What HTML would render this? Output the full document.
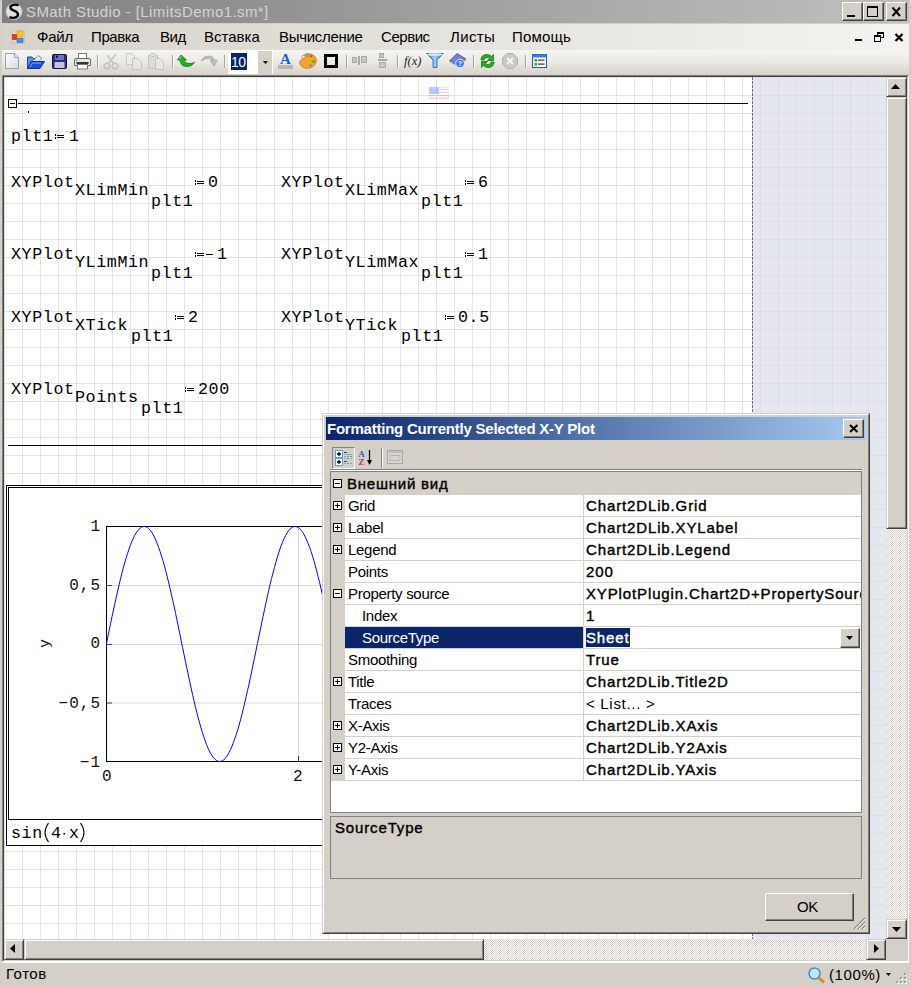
<!DOCTYPE html>
<html><head><meta charset="utf-8">
<style>
*{margin:0;padding:0;box-sizing:border-box}
html,body{width:911px;height:987px;overflow:hidden;background:#d4d0c8;font-family:"Liberation Sans",sans-serif;position:relative}
.a{position:absolute;white-space:nowrap;line-height:1}
.t15{font-size:15px;letter-spacing:-0.3px;color:#000}
.b15{font-size:15px;-webkit-text-stroke:0.4px currentColor;letter-spacing:0.87px;color:#000}
.plab{font-family:"Liberation Mono",monospace;font-size:16px;letter-spacing:1px;color:#111}
.mono{font-family:"Liberation Mono",monospace;font-size:16.67px;color:#000;letter-spacing:0.6px}
#title{left:2px;top:0;width:907px;height:23px;background:linear-gradient(to right,#808080,#c0c0c0)}
.tbtn{top:2px;width:21px;height:19px}
.btn3d{background:#d4d0c8;border-top:1px solid #fff;border-left:1px solid #fff;border-right:1px solid #404040;border-bottom:1px solid #404040;box-shadow:inset -1px -1px 0 #808080}
#menu{left:2px;top:24px;width:907px;height:26px;background:linear-gradient(to right,#d6d3cb 0%,#f4f3f0 100%)}
#tool{left:2px;top:50px;width:907px;height:24px;background:linear-gradient(to bottom,#f6f5f2,#ebe9e4 50%,#d8d4cc)}
#page{left:4px;top:77px;width:748px;height:862px;background-color:#fff;
 background-image:linear-gradient(to right,transparent 17px,#e3e3e3 17px),linear-gradient(to bottom,transparent 17px,#e3e3e3 17px);
 background-size:18px 18px;background-position:1px 1px}
#outer{left:752px;top:77px;width:134px;height:862px;background-color:#e4e7f0;
 background-image:linear-gradient(to right,transparent 17px,#dedee0 17px),linear-gradient(to bottom,transparent 17px,#dedee0 17px);
 background-size:18px 18px;background-position:-9px 1px}
.sb{background:#d4d0c8;border-top:1px solid #d4d0c8;border-left:1px solid #d4d0c8;border-right:1px solid #404040;border-bottom:1px solid #404040;box-shadow:inset 1px 1px 0 #fff,inset -1px -1px 0 #808080}
.dither{background-color:#fff;background-image:linear-gradient(45deg,#d4d0c8 25%,transparent 25%,transparent 75%,#d4d0c8 75%),linear-gradient(45deg,#d4d0c8 25%,transparent 25%,transparent 75%,#d4d0c8 75%);background-size:2px 2px;background-position:0 0,1px 1px}
.sep{position:absolute;width:2px;height:13px;border-left:1px solid #a5a29b;border-right:1px solid #fff;top:55px}
</style></head><body>
<div id="title" class="a"></div>
<svg class="a" style="left:4px;top:2px" width="20" height="19" viewBox="0 0 20 19">
 <circle cx="10" cy="9.5" r="8" fill="#e0e0e0" stroke="#bdbdbd" stroke-width="1"/>
 <path d="M14.5 3.5 C12 2 6 2.5 6.5 6 C7 9 14 8.5 14 12.5 C14 16 8 16.5 5.5 15" fill="none" stroke="#000" stroke-width="2.4"/>
</svg>
<div class="a" style="left:26px;top:4px;font-size:15px;letter-spacing:0.42px;color:#d8d4cc">SMath Studio - [LimitsDemo1.sm*]</div>
<div class="a tbtn btn3d" style="left:842px"><div class="a" style="left:4px;top:12px;width:8px;height:2px;background:#000"></div></div>
<div class="a tbtn btn3d" style="left:863px"><div class="a" style="left:3px;top:3px;width:11px;height:11px;border:1px solid #000;border-top:2px solid #000"></div></div>
<div class="a tbtn btn3d" style="left:886px"><svg class="a" style="left:4px;top:3px" width="11" height="11"><path d="M1.5 1.5 L9 10 M9 1.5 L1.5 10" stroke="#000" stroke-width="2"/></svg></div>

<div id="menu" class="a"></div>
<svg class="a" style="left:11px;top:30px" width="14" height="14" viewBox="0 0 14 14">
 <rect x="0.5" y="0.5" width="13" height="13" fill="#d9d6ce" stroke="#c8c5bd"/>
 <rect x="6" y="1" width="6" height="6" fill="#f7c825" stroke="#d9a300" stroke-width="0.6"/>
 <rect x="1.5" y="4.5" width="4" height="5" fill="#e23b2c" stroke="#a81e10" stroke-width="0.6"/>
 <rect x="6" y="8.5" width="6" height="4" fill="#4f8ee8" stroke="#2d64c0" stroke-width="0.6"/>
</svg>
<div class="a t15" style="left:37px;top:29px;letter-spacing:-0.2px">Файл</div>
<div class="a t15" style="left:91px;top:29px;letter-spacing:-0.4px">Правка</div>
<div class="a t15" style="left:160px;top:29px;letter-spacing:-0.5px">Вид</div>
<div class="a t15" style="left:204px;top:29px;letter-spacing:0px">Вставка</div>
<div class="a t15" style="left:279px;top:29px;letter-spacing:-0.3px">Вычисление</div>
<div class="a t15" style="left:381px;top:29px;letter-spacing:-0.45px">Сервис</div>
<div class="a t15" style="left:450px;top:29px;letter-spacing:0.35px">Листы</div>
<div class="a t15" style="left:512px;top:29px;letter-spacing:0.2px">Помощь</div>
<div class="a" style="left:855px;top:39px;width:7px;height:2px;background:#000"></div>
<svg class="a" style="left:874px;top:32px" width="10" height="10"><rect x="3.5" y="0.5" width="6" height="5" fill="none" stroke="#000"/><rect x="3" y="0" width="7" height="2" fill="#000"/><rect x="0.5" y="3.5" width="6" height="6" fill="#f2f1ee" stroke="#000"/><rect x="0" y="3" width="7" height="2" fill="#000"/></svg>
<svg class="a" style="left:894px;top:33px" width="10" height="9"><path d="M1.5 1 L8.5 8 M8.5 1 L1.5 8" stroke="#000" stroke-width="2.2"/></svg>

<div id="tool" class="a"></div>
<!-- new -->
<svg class="a" style="left:5px;top:53px" width="15" height="17" viewBox="0 0 15 17">
 <defs><linearGradient id="gpage" x1="0" y1="0" x2="1" y2="1"><stop offset="0" stop-color="#fff"/><stop offset="1" stop-color="#d8dbe6"/></linearGradient></defs>
 <path d="M0.5 0.5 H9.5 L13.5 4.5 V15.5 H0.5 Z" fill="url(#gpage)" stroke="#9a9da8"/>
 <path d="M9.5 0.5 V4.5 H13.5" fill="#e8e8ee" stroke="#9a9da8"/>
</svg>
<!-- open -->
<svg class="a" style="left:27px;top:54px" width="18" height="16" viewBox="0 0 18 16">
 <path d="M0.5 3 H5 L6.5 4.5 H12 V14.5 H0.5 Z" fill="#5d93e0" stroke="#1f46b8"/>
 <path d="M5 8 L11 1.5 L15 4 L10 10 Z" fill="#e6e6f2" stroke="#7b7fb0" stroke-width="0.8"/>
 <path d="M0.5 14.5 L4 7.5 H17.5 L13 14.5 Z" fill="#1b4fd8" stroke="#1035a8"/>
 <path d="M3 13 L5.5 9 H14" fill="none" stroke="#7ab0ff" stroke-width="1"/>
</svg>
<!-- save -->
<svg class="a" style="left:52px;top:54px" width="15" height="15" viewBox="0 0 15 15">
 <rect x="0.5" y="0.5" width="14" height="14" rx="1" fill="#2a2f7c" stroke="#10134a"/>
 <rect x="3" y="1" width="9" height="5" fill="#6c78b8"/>
 <rect x="4" y="1.5" width="2" height="2.5" fill="#10134a"/>
 <rect x="2.5" y="8" width="10" height="6" fill="#c4c4e0"/>
</svg>
<!-- print -->
<svg class="a" style="left:74px;top:53px" width="17" height="17" viewBox="0 0 17 17">
 <rect x="4.5" y="0.5" width="8" height="5" fill="#fff" stroke="#7a7a7a"/>
 <path d="M0.5 7 Q0.5 5.5 2 5.5 H15 Q16.5 5.5 16.5 7 V12.5 H0.5 Z" fill="#e6e6e6" stroke="#6a6a6a"/>
 <rect x="2.5" y="9" width="12" height="2" fill="#333"/>
 <rect x="3.5" y="11.5" width="10" height="4.5" fill="#fff" stroke="#7a7a7a"/>
 <circle cx="2.7" cy="7.5" r="0.8" fill="#28c028"/>
</svg>
<div class="sep" style="left:97px"></div>
<!-- cut (disabled) -->
<svg class="a" style="left:103px;top:53px" width="16" height="17" viewBox="0 0 16 17">
 <path d="M5 11 L13 1 M11 11 L4 2" stroke="#c4c4c4" stroke-width="1.6" fill="none"/>
 <circle cx="4" cy="13" r="2.8" fill="none" stroke="#c0c0c0" stroke-width="1.5"/>
 <circle cx="12" cy="13" r="2.8" fill="none" stroke="#c0c0c0" stroke-width="1.5"/>
</svg>
<!-- copy -->
<svg class="a" style="left:126px;top:53px" width="17" height="17" viewBox="0 0 17 17">
 <path d="M0.5 0.5 H6 L8.5 3 V11.5 H0.5 Z" fill="#ececec" stroke="#c8c8c8"/>
 <path d="M6.5 5.5 H12 L15.5 9 V16.5 H6.5 Z" fill="#e6e6e6" stroke="#c4c4c4"/>
</svg>
<!-- paste -->
<svg class="a" style="left:148px;top:53px" width="17" height="17" viewBox="0 0 17 17">
 <rect x="0.5" y="2.5" width="9" height="13" fill="#dcdcdc" stroke="#c4c4c4"/>
 <rect x="2.5" y="0.5" width="5" height="3" rx="1" fill="#e4e4e4" stroke="#c0c0c0"/>
 <path d="M7.5 5.5 H12 L15.5 9 V16.5 H7.5 Z" fill="#e8e8e8" stroke="#c4c4c4"/>
</svg>
<div class="sep" style="left:172px"></div>
<!-- undo green -->
<svg class="a" style="left:177px;top:54px" width="18" height="14" viewBox="0 0 18 14">
 <path d="M4 1 L0.5 6 H3 Q3.5 12.5 10 12.5 Q15 12.5 17.5 8.5 Q14 10 11 9.5 Q7 9 7 6 H9.5 Z" fill="#22b022" stroke="#0d7a0d" stroke-width="0.8"/>
 <path d="M4 2.5 L2.5 5" stroke="#a8f0a8" stroke-width="1"/>
</svg>
<!-- redo disabled -->
<svg class="a" style="left:201px;top:55px" width="17" height="13" viewBox="0 0 17 13">
 <path d="M0.5 6 Q2 1 8 1 Q12 1 13.5 5 H16.5 L13 11.5 L9 5 H11.5 Q10 3.5 7.5 3.5 Q3 3.5 0.5 6 Z" fill="#bcbcbc" stroke="#a8a8a8" stroke-width="0.7"/>
</svg>
<div class="sep" style="left:224px"></div>
<!-- combo -->
<div class="a" style="left:228px;top:50px;width:45px;height:24px;background:#fff"></div>
<div class="a" style="left:231px;top:53px;width:16px;height:17px;background:#0a246a"></div>
<div class="a" style="left:231px;top:55px;font-size:14px;color:#fff;letter-spacing:-0.5px">10</div>
<div class="a" style="left:258px;top:51px;width:14px;height:23px;background:#d4d0c8"></div>
<svg class="a" style="left:263px;top:61px" width="5" height="3"><path d="M0 0 H5 L2.5 3 Z" fill="#000"/></svg>
<!-- A -->
<svg class="a" style="left:278px;top:52px" width="16" height="17" viewBox="0 0 16 17">
 <text x="7.5" y="12" font-family="Liberation Serif" font-weight="bold" font-size="15" fill="#1a5fc8" text-anchor="middle">A</text>
 <rect x="0" y="13" width="15" height="4" fill="#b8b8b8"/>
</svg>
<!-- palette -->
<svg class="a" style="left:299px;top:53px" width="18" height="16" viewBox="0 0 18 16">
 <path d="M9 0.8 C14 0.8 17.3 3.5 17.3 7.5 C17.3 12 13 15.3 8.5 15.3 C4 15.3 0.7 12.5 0.7 9 C0.7 7 3.5 7.5 3.5 5.5 C3.5 3 5 0.8 9 0.8 Z" fill="#f5a623" stroke="#c47000" stroke-width="0.8"/>
 <circle cx="4.5" cy="3.8" r="1.6" fill="#fff" stroke="#b06000" stroke-width="0.6"/>
 <circle cx="8.5" cy="2.8" r="1.3" fill="#2aa8f0"/>
 <circle cx="12" cy="3.2" r="1.2" fill="#e84020"/>
 <circle cx="14.5" cy="8.5" r="1.6" fill="#30c030"/>
 <circle cx="11.5" cy="12.5" r="1.4" fill="#a070e0"/>
</svg>
<!-- border square -->
<div class="a" style="left:324px;top:54px;width:14px;height:14px;border:3px solid #000"></div>
<div class="sep" style="left:346px"></div>
<!-- align 1 -->
<svg class="a" style="left:352px;top:56px" width="16" height="10" viewBox="0 0 16 10">
 <rect x="0.5" y="1.5" width="4" height="5" fill="#c8c8c8" stroke="#a8a8a8"/>
 <rect x="6" y="0" width="2" height="9" fill="#a8a8a8"/>
 <rect x="9.5" y="0.5" width="5" height="6" fill="#c8c8c8" stroke="#a8a8a8"/>
</svg>
<!-- align 2 -->
<svg class="a" style="left:378px;top:53px" width="10" height="16" viewBox="0 0 10 16">
 <rect x="1.5" y="0.5" width="4" height="4" fill="#c8c8c8" stroke="#a8a8a8"/>
 <rect x="0" y="6" width="9" height="2" fill="#a8a8a8"/>
 <rect x="1.5" y="9.5" width="6" height="5" fill="#c8c8c8" stroke="#a8a8a8"/>
</svg>
<div class="sep" style="left:397px"></div>
<div class="a" style="left:404px;top:55px;font-family:'Liberation Serif',serif;font-style:italic;font-size:12.5px;color:#222">f(x)</div>
<!-- funnel -->
<svg class="a" style="left:426px;top:53px" width="18" height="15" viewBox="0 0 18 15">
 <defs><linearGradient id="gfun" x1="0" x2="1"><stop offset="0" stop-color="#3a86c8"/><stop offset="0.5" stop-color="#9cd0f4"/><stop offset="1" stop-color="#2a70b0"/></linearGradient></defs>
 <path d="M0.5 0.5 H17.5 L11 7 V14.5 H7 V7 Z" fill="url(#gfun)" stroke="#2060a0" stroke-width="0.8"/>
 <ellipse cx="9" cy="1.5" rx="8" ry="1.3" fill="#d8eefc"/>
</svg>
<!-- book ? -->
<svg class="a" style="left:449px;top:53px" width="18" height="16" viewBox="0 0 18 16">
 <path d="M0.5 8 L8 0.5 L17 6 L10 14 Z" fill="#7a7ed8" stroke="#3a3e98" stroke-width="0.8"/>
 <path d="M1.5 9.5 L10 15 L17 7" fill="none" stroke="#d0d0f0" stroke-width="1.2"/>
 <circle cx="11" cy="10.5" r="4.3" fill="#3c78e0" stroke="#fff" stroke-width="0.8"/>
 <text x="11" y="13.3" font-size="7" font-weight="bold" fill="#fff" text-anchor="middle" font-family="Liberation Sans">?</text>
</svg>
<div class="sep" style="left:473px"></div>
<!-- refresh green -->
<svg class="a" style="left:479px;top:53px" width="17" height="16" viewBox="0 0 17 16">
 <path d="M2 7 Q2 1.5 8 1.5 Q11 1.5 12.5 3.5 L14.5 1.5 V7.5 H8.5 L10.5 5.5 Q9.5 4.5 8 4.5 Q5 4.5 5 7 Z" fill="#22b022" stroke="#0a700a" stroke-width="0.7"/>
 <path d="M15 9 Q15 14.5 9 14.5 Q6 14.5 4.5 12.5 L2.5 14.5 V8.5 H8.5 L6.5 10.5 Q7.5 11.5 9 11.5 Q12 11.5 12 9 Z" fill="#22b022" stroke="#0a700a" stroke-width="0.7"/>
</svg>
<!-- stop gray -->
<svg class="a" style="left:502px;top:53px" width="16" height="16" viewBox="0 0 16 16">
 <path d="M5 0.5 H11 L15.5 5 V11 L11 15.5 H5 L0.5 11 V5 Z" fill="#c8c8c8" stroke="#b0b0b0"/>
 <path d="M5 5 L11 11 M11 5 L5 11" stroke="#f4f4f4" stroke-width="2.2"/>
</svg>
<div class="sep" style="left:525px"></div>
<!-- list -->
<svg class="a" style="left:532px;top:54px" width="15" height="14" viewBox="0 0 15 14">
 <rect x="0.5" y="0.5" width="14" height="13" fill="#fff" stroke="#1a5ab8"/>
 <rect x="0.5" y="0.5" width="14" height="3" fill="#3a80e0"/>
 <rect x="2.5" y="5" width="2.5" height="2.5" fill="#30a030"/>
 <rect x="2.5" y="9" width="2.5" height="2.5" fill="#30a030"/>
 <rect x="6" y="5.5" width="6.5" height="1.2" fill="#333"/>
 <rect x="6" y="9.5" width="6.5" height="1.2" fill="#333"/>
</svg>
<div class="a" style="left:2px;top:75px;width:907px;height:887px;border-top:1px solid #808080;border-left:1px solid #808080;border-right:1px solid #fff;border-bottom:1px solid #fff"></div>
<div class="a" style="left:3px;top:76px;width:905px;height:885px;border-top:1px solid #404040;border-left:1px solid #404040;border-right:1px solid #d4d0c8;border-bottom:1px solid #d4d0c8"></div>
<div id="page" class="a"></div>
<div id="outer" class="a"></div>
<div class="a" style="left:752px;top:77px;width:1px;height:862px;background:repeating-linear-gradient(to bottom,#707070 0 3px,transparent 3px 4px)"></div>

<!-- region -->
<div class="a" style="left:8px;top:99px;width:9px;height:9px;border:1px solid #000;background:#fff"></div>
<div class="a" style="left:10px;top:103px;width:5px;height:1px;background:#000"></div>
<div class="a" style="left:18px;top:103px;width:730px;height:1px;background:#000"></div>
<div class="a" style="left:28px;top:111px;width:1px;height:2px;background:#000"></div>
<!-- flag -->
<svg class="a" style="left:429px;top:87px;opacity:0.45" width="20" height="12" viewBox="0 0 20 12">
 <rect x="0" y="0" width="20" height="12" fill="#fff"/>
 <rect x="0" y="0" width="20" height="12" fill="none" stroke="#ff8080" stroke-width="1"/>
 <rect x="10" y="2" width="9" height="1" fill="#ff8080"/><rect x="10" y="5" width="9" height="1" fill="#ff8080"/><rect x="0" y="8" width="20" height="1" fill="#ff8080"/><rect x="0" y="10.5" width="20" height="1" fill="#ff8080"/>
 <rect x="0" y="0" width="10" height="7" fill="#8080ff"/>
 <rect x="1.5" y="1.5" width="8" height="5" fill="#4a90ff"/>
</svg>

<div class="a mono" style="left:11px;top:129px">plt1</div>
<svg class="a" style="left:55px;top:134px" width="9" height="5"><rect x="0" y="0" width="1" height="2"/><rect x="0" y="3" width="1" height="2"/><rect x="2" y="1" width="7" height="1"/><rect x="2" y="3" width="7" height="1"/></svg>
<div class="a mono" style="left:69px;top:129px">1</div>

<!-- row 2 -->
<div class="a mono" style="left:11px;top:175px">XYPlot</div>
<div class="a mono" style="left:75px;top:183px">XLimMin</div>
<div class="a mono" style="left:151px;top:194px">plt1</div>
<svg class="a" style="left:195px;top:180px" width="9" height="5"><rect x="0" y="0" width="1" height="2"/><rect x="0" y="3" width="1" height="2"/><rect x="2" y="1" width="7" height="1"/><rect x="2" y="3" width="7" height="1"/></svg>
<div class="a mono" style="left:208px;top:175px">0</div>
<div class="a mono" style="left:281px;top:175px">XYPlot</div>
<div class="a mono" style="left:345px;top:183px">XLimMax</div>
<div class="a mono" style="left:421px;top:194px">plt1</div>
<svg class="a" style="left:465px;top:180px" width="9" height="5"><rect x="0" y="0" width="1" height="2"/><rect x="0" y="3" width="1" height="2"/><rect x="2" y="1" width="7" height="1"/><rect x="2" y="3" width="7" height="1"/></svg>
<div class="a mono" style="left:478px;top:175px">6</div>
<!-- row 3 -->
<div class="a mono" style="left:11px;top:247px">XYPlot</div>
<div class="a mono" style="left:75px;top:255px">YLimMin</div>
<div class="a mono" style="left:151px;top:266px">plt1</div>
<svg class="a" style="left:195px;top:252px" width="9" height="5"><rect x="0" y="0" width="1" height="2"/><rect x="0" y="3" width="1" height="2"/><rect x="2" y="1" width="7" height="1"/><rect x="2" y="3" width="7" height="1"/></svg><div class="a" style="left:206px;top:254px;width:7px;height:1px;background:#000"></div><div class="a mono" style="left:217px;top:247px">1</div>
<div class="a mono" style="left:281px;top:247px">XYPlot</div>
<div class="a mono" style="left:345px;top:255px">YLimMax</div>
<div class="a mono" style="left:421px;top:266px">plt1</div>
<svg class="a" style="left:465px;top:252px" width="9" height="5"><rect x="0" y="0" width="1" height="2"/><rect x="0" y="3" width="1" height="2"/><rect x="2" y="1" width="7" height="1"/><rect x="2" y="3" width="7" height="1"/></svg>
<div class="a mono" style="left:478px;top:247px">1</div>
<!-- row 4 -->
<div class="a mono" style="left:11px;top:310px">XYPlot</div>
<div class="a mono" style="left:75px;top:318px">XTick</div>
<div class="a mono" style="left:131px;top:329px">plt1</div>
<svg class="a" style="left:175px;top:315px" width="9" height="5"><rect x="0" y="0" width="1" height="2"/><rect x="0" y="3" width="1" height="2"/><rect x="2" y="1" width="7" height="1"/><rect x="2" y="3" width="7" height="1"/></svg>
<div class="a mono" style="left:188px;top:310px">2</div>
<div class="a mono" style="left:281px;top:310px">XYPlot</div>
<div class="a mono" style="left:345px;top:318px">YTick</div>
<div class="a mono" style="left:401px;top:329px">plt1</div>
<svg class="a" style="left:445px;top:315px" width="9" height="5"><rect x="0" y="0" width="1" height="2"/><rect x="0" y="3" width="1" height="2"/><rect x="2" y="1" width="7" height="1"/><rect x="2" y="3" width="7" height="1"/></svg>
<div class="a mono" style="left:458px;top:310px">0.5</div>
<!-- row 5 -->
<div class="a mono" style="left:11px;top:382px">XYPlot</div>
<div class="a mono" style="left:75px;top:390px">Points</div>
<div class="a mono" style="left:141px;top:401px">plt1</div>
<svg class="a" style="left:185px;top:387px" width="9" height="5"><rect x="0" y="0" width="1" height="2"/><rect x="0" y="3" width="1" height="2"/><rect x="2" y="1" width="7" height="1"/><rect x="2" y="3" width="7" height="1"/></svg>
<div class="a mono" style="left:198px;top:382px">200</div>

<!-- region end line -->
<div class="a" style="left:8px;top:445px;width:740px;height:1px;background:#000"></div>

<!-- plot -->
<div class="a" style="left:6px;top:485px;width:700px;height:361px;background:#fff;border:1px solid #000"></div>
<div class="a" style="left:8px;top:487px;width:696px;height:333px;border:1px solid #000"></div>
<svg class="a" style="left:0;top:480px" width="700" height="300" viewBox="0 480 700 300">
 <g stroke="#d8d8d8" stroke-width="1">
  <line x1="107" y1="585.5" x2="683" y2="585.5"/>
  <line x1="107" y1="644.5" x2="683" y2="644.5"/>
  <line x1="107" y1="703" x2="683" y2="703"/>
  <line x1="298.5" y1="527" x2="298.5" y2="761"/>
 </g>
 <g stroke="#404040" stroke-width="1">
  <line x1="107" y1="585.5" x2="112" y2="585.5"/>
  <line x1="107" y1="644.5" x2="112" y2="644.5"/>
  <line x1="107" y1="703" x2="112" y2="703"/>
  <line x1="298.5" y1="756" x2="298.5" y2="761"/>
 </g>
 <rect x="106.5" y="526.5" width="576" height="235" fill="none" stroke="#000" stroke-width="1"/>
 <polyline fill="none" stroke="#0000ff" stroke-width="1" points="106.4,644.0 107.8,637.1 109.2,630.2 110.6,623.4 112.0,616.6 113.5,610.0 114.9,603.4 116.3,597.0 117.7,590.8 119.1,584.7 120.5,578.9 121.9,573.2 123.3,567.9 124.7,562.7 126.2,557.9 127.6,553.3 129.0,549.1 130.4,545.2 131.8,541.6 133.2,538.4 134.6,535.6 136.0,533.1 137.5,531.0 138.9,529.3 140.3,528.0 141.7,527.1 143.1,526.6 144.5,526.5 145.9,526.8 147.3,527.5 148.7,528.7 150.2,530.2 151.6,532.1 153.0,534.4 154.4,537.0 155.8,540.1 157.2,543.5 158.6,547.2 160.0,551.3 161.4,555.7 162.9,560.4 164.3,565.4 165.7,570.7 167.1,576.2 168.5,581.9 169.9,587.9 171.3,594.0 172.7,600.4 174.2,606.9 175.6,613.5 177.0,620.2 178.4,627.0 179.8,633.8 181.2,640.7 182.6,647.6 184.0,654.5 185.4,661.4 186.9,668.2 188.3,674.9 189.7,681.5 191.1,688.0 192.5,694.3 193.9,700.4 195.3,706.4 196.7,712.1 198.1,717.6 199.6,722.9 201.0,727.9 202.4,732.5 203.8,736.9 205.2,741.0 206.6,744.7 208.0,748.1 209.4,751.1 210.8,753.8 212.3,756.0 213.7,757.9 215.1,759.4 216.5,760.5 217.9,761.2 219.3,761.5 220.7,761.4 222.1,760.9 223.6,759.9 225.0,758.6 226.4,756.9 227.8,754.8 229.2,752.3 230.6,749.4 232.0,746.2 233.4,742.6 234.8,738.7 236.3,734.4 237.7,729.9 239.1,725.0 240.5,719.9 241.9,714.5 243.3,708.8 244.7,703.0 246.1,696.9 247.5,690.6 249.0,684.2 250.4,677.7 251.8,671.0 253.2,664.2 254.6,657.4 256.0,650.5 257.4,643.6 258.8,636.7 260.3,629.9 261.7,623.0 263.1,616.3 264.5,609.6 265.9,603.1 267.3,596.7 268.7,590.5 270.1,584.4 271.5,578.6 273.0,573.0 274.4,567.6 275.8,562.5 277.2,557.6 278.6,553.1 280.0,548.9 281.4,545.0 282.8,541.5 284.2,538.3 285.7,535.4 287.1,533.0 288.5,530.9 289.9,529.2 291.3,528.0 292.7,527.1 294.1,526.6 295.5,526.5 296.9,526.9 298.4,527.6 299.8,528.7 301.2,530.3 302.6,532.2 304.0,534.5 305.4,537.2 306.8,540.2 308.2,543.7 309.7,547.4 311.1,551.5 312.5,555.9 313.9,560.7 315.3,565.7 316.7,570.9 318.1,576.5 319.5,582.2 320.9,588.2 322.4,594.4 323.8,600.7 325.2,607.2 326.6,613.8 328.0,620.5 329.4,627.3 330.8,634.2 332.2,641.1"/>
</svg>
<div class="a plab" style="right:810px;top:519px">1</div>
<div class="a plab" style="right:810px;top:578px">0,5</div>
<div class="a plab" style="right:810px;top:636px">0</div>
<div class="a plab" style="right:810px;top:696px">−0,5</div>
<div class="a plab" style="right:810px;top:755px">−1</div>
<div class="a plab" style="left:102px;top:769px">0</div>
<div class="a plab" style="left:293px;top:769px">2</div>
<div class="a plab" style="left:38px;top:648px;font-size:15px;transform:rotate(-90deg);transform-origin:0 0">y</div>
<div class="a mono" style="left:11px;top:826px">sin</div>
<svg class="a" style="left:44px;top:822px" width="42" height="21" viewBox="0 0 42 21">
 <path d="M4.5 1 Q1 6 1 10.5 Q1 15 4.5 20" fill="none" stroke="#000" stroke-width="1.1"/>
 <path d="M36.5 1 Q40 6 40 10.5 Q40 15 36.5 20" fill="none" stroke="#000" stroke-width="1.1"/>
 <rect x="19.5" y="11" width="1.6" height="1.6" fill="#000"/>
</svg>
<div class="a mono" style="left:51px;top:826px">4</div>
<div class="a mono" style="left:69px;top:826px">x</div>
<!-- vertical scrollbar -->
<div class="a dither" style="left:886px;top:77px;width:21px;height:862px"></div>
<div class="a sb" style="left:886px;top:77px;width:21px;height:20px"></div>
<svg class="a" style="left:891px;top:84px" width="9" height="5"><path d="M0 5 H9 L4.5 0 Z" fill="#000"/></svg>
<div class="a sb" style="left:886px;top:97px;width:21px;height:432px"></div>
<div class="a sb" style="left:886px;top:919px;width:21px;height:20px"></div>
<svg class="a" style="left:892px;top:927px" width="9" height="5"><path d="M0 0 H9 L4.5 5 Z" fill="#000"/></svg>
<!-- horizontal scrollbar -->
<div class="a dither" style="left:4px;top:939px;width:882px;height:21px"></div>
<div class="a sb" style="left:4px;top:939px;width:20px;height:21px"></div>
<svg class="a" style="left:10px;top:944px" width="5" height="9"><path d="M5 0 V9 L0 4.5 Z" fill="#000"/></svg>
<div class="a sb" style="left:24px;top:939px;width:460px;height:21px"></div>
<div class="a sb" style="left:866px;top:939px;width:20px;height:21px"></div>
<svg class="a" style="left:874px;top:944px" width="5" height="9"><path d="M0 0 V9 L5 4.5 Z" fill="#000"/></svg>
<div class="a" style="left:886px;top:939px;width:21px;height:21px;background:#d4d0c8"></div>
<div class="a" style="left:2px;top:962px;width:907px;height:1px;background:#fff"></div>

<!-- status -->
<div class="a t15" style="left:6px;top:966px;letter-spacing:0.5px">Готов</div>
<svg class="a" style="left:808px;top:967px" width="18" height="17" viewBox="0 0 18 17">
 <circle cx="6.5" cy="6.5" r="5.5" fill="#bfe4fb" stroke="#3a8ad0" stroke-width="1.4"/>
 <path d="M10.5 10.5 L16 15.5" stroke="#e08a20" stroke-width="3"/>
</svg>
<div class="a t15" style="left:829px;top:967px;letter-spacing:0.6px">(100%)</div>
<svg class="a" style="left:886px;top:973px" width="5" height="3"><path d="M0 0 H5 L2.5 3 Z" fill="#000"/></svg>
<svg class="a" style="left:896px;top:973px" width="12" height="12">
 <g fill="#fff"><rect x="9" y="1" width="2" height="2"/><rect x="5" y="5" width="2" height="2"/><rect x="9" y="5" width="2" height="2"/><rect x="1" y="9" width="2" height="2"/><rect x="5" y="9" width="2" height="2"/><rect x="9" y="9" width="2" height="2"/></g>
 <g fill="#a0a0a0"><rect x="8" y="0" width="2" height="2"/><rect x="4" y="4" width="2" height="2"/><rect x="8" y="4" width="2" height="2"/><rect x="0" y="8" width="2" height="2"/><rect x="4" y="8" width="2" height="2"/><rect x="8" y="8" width="2" height="2"/></g>
</svg>
<div class="a" style="left:322px;top:413px;width:548px;height:521px;background:#d4d0c8;border-top:1px solid #d4d0c8;border-left:1px solid #d4d0c8;border-right:1px solid #404040;border-bottom:1px solid #404040"></div>
<div class="a" style="left:323px;top:414px;width:546px;height:519px;border-top:1px solid #fff;border-left:1px solid #fff;border-right:1px solid #808080;border-bottom:1px solid #808080"></div>
<div class="a" style="left:326px;top:417px;width:540px;height:23px;background:linear-gradient(to right,#0a246a,#a6caf0)"></div>
<div class="a" style="left:327px;top:421px;font-size:15px;font-weight:bold;letter-spacing:-0.23px;color:#fff">Formatting Currently Selected X-Y Plot</div>
<div class="a btn3d" style="left:843px;top:419px;width:21px;height:19px"><svg class="a" style="left:5px;top:4px" width="10" height="9"><path d="M1 1 L8.5 8 M8.5 1 L1 8" stroke="#000" stroke-width="2"/></svg></div>
<div class="a" style="left:332px;top:447px;width:23px;height:22px;background:#d4d0c8;border-top:1px solid #808080;border-left:1px solid #808080;border-right:1px solid #fff;border-bottom:1px solid #fff"></div>
<svg class="a" style="left:335px;top:449px" width="18" height="17" viewBox="0 0 18 17">
 <rect x="0.5" y="1.5" width="7" height="7" fill="#fff" stroke="#5aa0e8"/><path d="M2 5 H6 M4 3 V7" stroke="#000" stroke-width="1.3"/>
 <rect x="0.5" y="9.5" width="7" height="7" fill="#fff" stroke="#5aa0e8"/><path d="M2 13 H6 M4 11 V15" stroke="#000" stroke-width="1.3"/>
 <rect x="9" y="3" width="3" height="1" fill="#404040"/><rect x="9" y="12" width="3" height="1" fill="#404040"/>
 <g fill="#9a9ad8"><rect x="9" y="5" width="2" height="1"/><rect x="9" y="7" width="2" height="1"/><rect x="9" y="9" width="2" height="1"/><rect x="9" y="14" width="2" height="1"/><rect x="15" y="5" width="2" height="1"/><rect x="15" y="9" width="2" height="1"/><rect x="15" y="14" width="2" height="1"/></g>
 <g fill="#50a8a8"><rect x="12" y="5" width="2" height="1"/><rect x="12" y="7" width="2" height="1"/><rect x="12" y="9" width="2" height="1"/><rect x="12" y="14" width="2" height="1"/><rect x="15" y="7" width="2" height="1"/></g>
</svg>
<svg class="a" style="left:357px;top:449px" width="18" height="18" viewBox="0 0 18 18">
 <text x="4.5" y="8" font-family="Liberation Serif" font-size="9" font-weight="bold" fill="#3060d0" text-anchor="middle">A</text>
 <text x="4.5" y="16" font-family="Liberation Serif" font-size="9" font-weight="bold" fill="#c03030" text-anchor="middle">Z</text>
 <path d="M12.5 1 V15" stroke="#000" stroke-width="1.2"/><path d="M10 11 L12.5 16 L15 11 Z" fill="#000"/>
</svg>
<div class="a" style="left:381px;top:448px;width:2px;height:20px;border-left:1px solid #808080;border-right:1px solid #fff"></div>
<svg class="a" style="left:387px;top:450px" width="17" height="15" viewBox="0 0 17 15">
 <rect x="0.5" y="0.5" width="15" height="13" fill="#d8d5ce" stroke="#a8a6a0"/><rect x="1" y="1" width="14" height="2" fill="#c0beb8"/>
 <rect x="3" y="5.5" width="10" height="5" fill="none" stroke="#b8b6b0"/>
</svg>
<div class="a" style="left:330px;top:469px;width:532px;height:1px;background:#808080"></div>
<div class="a" style="left:330px;top:470px;width:532px;height:1px;background:#fff"></div>
<div class="a" style="left:330px;top:471px;width:532px;height:342px;background:#fff;border:1px solid #808080"></div>
<div class="a" style="left:331px;top:472px;width:530px;height:23px;background:#d4d0c8"></div>
<div class="a" style="left:331px;top:495px;width:14px;height:286px;background:#d4d0c8"></div>
<div class="a" style="left:333px;top:479px;width:9px;height:9px;border:1px solid #000;background:#fff"></div><div class="a" style="left:335px;top:483px;width:5px;height:1px;background:#000"></div>
<div class="a b15" style="left:347px;top:476px;letter-spacing:0.78px">Внешний вид</div>
<div class="a" style="left:331px;top:516px;width:530px;height:1px;background:#d4d0c8"></div>
<div class="a" style="left:583px;top:495px;width:1px;height:21px;background:#d4d0c8"></div>
<div class="a" style="left:333px;top:501px;width:9px;height:9px;border:1px solid #000;background:#fff"></div><div class="a" style="left:335px;top:505px;width:5px;height:1px;background:#000"></div>
<div class="a" style="left:337px;top:503px;width:1px;height:5px;background:#000"></div>
<div class="a t15" style="left:348px;top:498px;color:#000">Grid</div>
<div class="a" style="left:584px;top:495px;width:277px;height:21px;overflow:hidden"><div class="a b15" style="left:2px;top:3px">Chart2DLib.Grid</div></div>
<div class="a" style="left:331px;top:538px;width:530px;height:1px;background:#d4d0c8"></div>
<div class="a" style="left:583px;top:517px;width:1px;height:21px;background:#d4d0c8"></div>
<div class="a" style="left:333px;top:523px;width:9px;height:9px;border:1px solid #000;background:#fff"></div><div class="a" style="left:335px;top:527px;width:5px;height:1px;background:#000"></div>
<div class="a" style="left:337px;top:525px;width:1px;height:5px;background:#000"></div>
<div class="a t15" style="left:348px;top:520px;color:#000">Label</div>
<div class="a" style="left:584px;top:517px;width:277px;height:21px;overflow:hidden"><div class="a b15" style="left:2px;top:3px">Chart2DLib.XYLabel</div></div>
<div class="a" style="left:331px;top:560px;width:530px;height:1px;background:#d4d0c8"></div>
<div class="a" style="left:583px;top:539px;width:1px;height:21px;background:#d4d0c8"></div>
<div class="a" style="left:333px;top:545px;width:9px;height:9px;border:1px solid #000;background:#fff"></div><div class="a" style="left:335px;top:549px;width:5px;height:1px;background:#000"></div>
<div class="a" style="left:337px;top:547px;width:1px;height:5px;background:#000"></div>
<div class="a t15" style="left:348px;top:542px;color:#000">Legend</div>
<div class="a" style="left:584px;top:539px;width:277px;height:21px;overflow:hidden"><div class="a b15" style="left:2px;top:3px">Chart2DLib.Legend</div></div>
<div class="a" style="left:331px;top:582px;width:530px;height:1px;background:#d4d0c8"></div>
<div class="a" style="left:583px;top:561px;width:1px;height:21px;background:#d4d0c8"></div>
<div class="a t15" style="left:348px;top:564px;color:#000">Points</div>
<div class="a" style="left:584px;top:561px;width:277px;height:21px;overflow:hidden"><div class="a b15" style="left:2px;top:3px">200</div></div>
<div class="a" style="left:331px;top:604px;width:530px;height:1px;background:#d4d0c8"></div>
<div class="a" style="left:583px;top:583px;width:1px;height:21px;background:#d4d0c8"></div>
<div class="a" style="left:333px;top:589px;width:9px;height:9px;border:1px solid #000;background:#fff"></div><div class="a" style="left:335px;top:593px;width:5px;height:1px;background:#000"></div>
<div class="a t15" style="left:348px;top:586px;color:#000">Property source</div>
<div class="a" style="left:584px;top:583px;width:277px;height:21px;overflow:hidden"><div class="a b15" style="left:2px;top:3px">XYPlotPlugin.Chart2D+PropertySource</div></div>
<div class="a" style="left:331px;top:626px;width:530px;height:1px;background:#d4d0c8"></div>
<div class="a" style="left:583px;top:605px;width:1px;height:21px;background:#d4d0c8"></div>
<div class="a t15" style="left:362px;top:608px;color:#000">Index</div>
<div class="a" style="left:584px;top:605px;width:277px;height:21px;overflow:hidden"><div class="a b15" style="left:2px;top:3px">1</div></div>
<div class="a" style="left:345px;top:627px;width:238px;height:21px;background:#0a246a"></div>
<div class="a" style="left:331px;top:648px;width:530px;height:1px;background:#d4d0c8"></div>
<div class="a" style="left:583px;top:627px;width:1px;height:21px;background:#d4d0c8"></div>
<div class="a t15" style="left:362px;top:630px;color:#fff">SourceType</div>
<div class="a" style="left:586px;top:628px;width:44px;height:19px;background:#0a246a"></div>
<div class="a b15" style="left:586px;top:630px;color:#fff">Sheet</div>
<div class="a btn3d" style="left:840px;top:628px;width:20px;height:20px"><svg class="a" style="left:5px;top:7px" width="7" height="4"><path d="M0 0 H7 L3.5 4 Z" fill="#000"/></svg></div>
<div class="a" style="left:331px;top:670px;width:530px;height:1px;background:#d4d0c8"></div>
<div class="a" style="left:583px;top:649px;width:1px;height:21px;background:#d4d0c8"></div>
<div class="a t15" style="left:348px;top:652px;color:#000">Smoothing</div>
<div class="a" style="left:584px;top:649px;width:277px;height:21px;overflow:hidden"><div class="a b15" style="left:2px;top:3px">True</div></div>
<div class="a" style="left:331px;top:692px;width:530px;height:1px;background:#d4d0c8"></div>
<div class="a" style="left:583px;top:671px;width:1px;height:21px;background:#d4d0c8"></div>
<div class="a" style="left:333px;top:677px;width:9px;height:9px;border:1px solid #000;background:#fff"></div><div class="a" style="left:335px;top:681px;width:5px;height:1px;background:#000"></div>
<div class="a" style="left:337px;top:679px;width:1px;height:5px;background:#000"></div>
<div class="a t15" style="left:348px;top:674px;color:#000">Title</div>
<div class="a" style="left:584px;top:671px;width:277px;height:21px;overflow:hidden"><div class="a b15" style="left:2px;top:3px">Chart2DLib.Title2D</div></div>
<div class="a" style="left:331px;top:714px;width:530px;height:1px;background:#d4d0c8"></div>
<div class="a" style="left:583px;top:693px;width:1px;height:21px;background:#d4d0c8"></div>
<div class="a t15" style="left:348px;top:696px;color:#000">Traces</div>
<div class="a" style="left:584px;top:693px;width:277px;height:21px;overflow:hidden"><div class="a t15" style="left:2px;top:3px;letter-spacing:0.7px">&lt; List... &gt;</div></div>
<div class="a" style="left:331px;top:736px;width:530px;height:1px;background:#d4d0c8"></div>
<div class="a" style="left:583px;top:715px;width:1px;height:21px;background:#d4d0c8"></div>
<div class="a" style="left:333px;top:721px;width:9px;height:9px;border:1px solid #000;background:#fff"></div><div class="a" style="left:335px;top:725px;width:5px;height:1px;background:#000"></div>
<div class="a" style="left:337px;top:723px;width:1px;height:5px;background:#000"></div>
<div class="a t15" style="left:348px;top:718px;color:#000">X-Axis</div>
<div class="a" style="left:584px;top:715px;width:277px;height:21px;overflow:hidden"><div class="a b15" style="left:2px;top:3px">Chart2DLib.XAxis</div></div>
<div class="a" style="left:331px;top:758px;width:530px;height:1px;background:#d4d0c8"></div>
<div class="a" style="left:583px;top:737px;width:1px;height:21px;background:#d4d0c8"></div>
<div class="a" style="left:333px;top:743px;width:9px;height:9px;border:1px solid #000;background:#fff"></div><div class="a" style="left:335px;top:747px;width:5px;height:1px;background:#000"></div>
<div class="a" style="left:337px;top:745px;width:1px;height:5px;background:#000"></div>
<div class="a t15" style="left:348px;top:740px;color:#000">Y2-Axis</div>
<div class="a" style="left:584px;top:737px;width:277px;height:21px;overflow:hidden"><div class="a b15" style="left:2px;top:3px">Chart2DLib.Y2Axis</div></div>
<div class="a" style="left:331px;top:780px;width:530px;height:1px;background:#d4d0c8"></div>
<div class="a" style="left:583px;top:759px;width:1px;height:21px;background:#d4d0c8"></div>
<div class="a" style="left:333px;top:765px;width:9px;height:9px;border:1px solid #000;background:#fff"></div><div class="a" style="left:335px;top:769px;width:5px;height:1px;background:#000"></div>
<div class="a" style="left:337px;top:767px;width:1px;height:5px;background:#000"></div>
<div class="a t15" style="left:348px;top:762px;color:#000">Y-Axis</div>
<div class="a" style="left:584px;top:759px;width:277px;height:21px;overflow:hidden"><div class="a b15" style="left:2px;top:3px">Chart2DLib.YAxis</div></div>

<div class="a" style="left:330px;top:816px;width:532px;height:63px;border:1px solid #808080"></div>
<div class="a b15" style="left:335px;top:820px;letter-spacing:0.85px">SourceType</div>
<div class="a btn3d" style="left:765px;top:893px;width:89px;height:28px;border-top:1px solid #fff;border-left:1px solid #fff;border-right:1px solid #404040;border-bottom:1px solid #404040"></div>
<div class="a t15" style="left:797px;top:899px">OK</div>
<svg class="a" style="left:853px;top:917px" width="13" height="13"><path d="M12 1 L1 12 M12 5 L5 12 M12 9 L9 12" stroke="#808080" stroke-width="1.2"/><path d="M12 2 L2 12 M12 6 L6 12 M12 10 L10 12" stroke="#fff" stroke-width="0.8"/></svg></body></html>
